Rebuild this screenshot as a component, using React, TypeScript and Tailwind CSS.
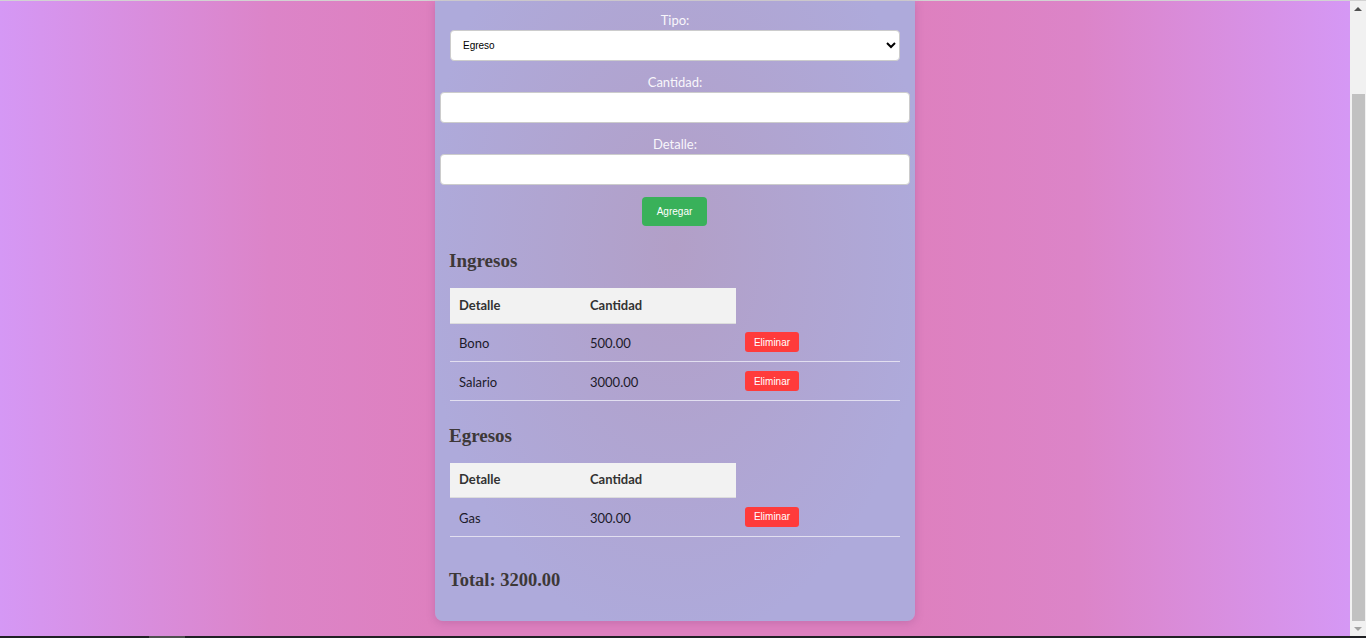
import React from 'react';

type Item = { detalle: string; cantidad: string };

const ingresos: Item[] = [
  { detalle: 'Bono', cantidad: '500.00' },
  { detalle: 'Salario', cantidad: '3000.00' },
];

const egresos: Item[] = [{ detalle: 'Gas', cantidad: '300.00' }];

function Field({ label, children }: { label: string; children: React.ReactNode }) {
  return (
    <div className="mt-[12px] first:mt-0">
      <label className="block text-center text-[13px] leading-[18px] text-[#f8f6fb]">{label}</label>
      <div className="mt-[1px]">{children}</div>
    </div>
  );
}

function Tabla({ items }: { items: Item[] }) {
  return (
    <table className="w-[450px] table-fixed border-collapse font-['Lato',sans-serif] text-[13px]">
      <colgroup>
        <col className="w-[131px]" />
        <col className="w-[155px]" />
        <col className="w-[164px]" />
      </colgroup>
      <thead>
        <tr className="h-[35px]">
          <th className="bg-[#f2f2f2] border-b border-[#dcdcdc] pl-[9px] text-left font-bold text-[#333]">Detalle</th>
          <th className="bg-[#f2f2f2] border-b border-[#dcdcdc] pl-[9px] text-left font-bold text-[#333]">Cantidad</th>
        </tr>
      </thead>
      <tbody>
        {items.map((it) => (
          <tr key={it.detalle} className="h-[38.5px] border-b border-[#e2dff0]">
            <td className="pl-[9px] pt-[3px] text-[#1c1a2a]">{it.detalle}</td>
            <td className="pl-[9px] pt-[3px] text-[#1c1a2a]">{it.cantidad}</td>
            <td className="pl-[9px]">
              <button className="h-[20px] w-[54px] rounded-[3px] bg-[#ff3b3b] font-['Liberation_Sans',Arial,sans-serif] text-[10px] text-white">
                Eliminar
              </button>
            </td>
          </tr>
        ))}
      </tbody>
    </table>
  );
}

export default function App() {
  return (
    <div className="flex h-[638px] w-[1366px] flex-col overflow-hidden font-['Lato',sans-serif]">
      <div className="h-px bg-[#d2d2d2]" />
      <div className="flex flex-1">
        <div className="flex-1 bg-[linear-gradient(to_right,#d598f5_0%,#dc84c8_20%,#de80bf_32%,#de80bf_68%,#dc84c8_80%,#d598f5_100%)]">
          <div className="mx-auto w-[480px] rounded-b-lg bg-[radial-gradient(ellipse_at_50%_40%,#b29fc7_0%,#aeaadb_75%)] px-[15px] pt-[10px] pb-[29px] shadow-[0_2px_8px_rgba(120,60,120,0.25)]">
            <Field label="Tipo:">
              <select
                defaultValue="Egreso"
                className="h-[31px] w-[450px] rounded-[4px] border border-[#cccccc] bg-white pl-[8px] font-['Liberation_Sans',Arial,sans-serif] text-[10px] text-black"
              >
                <option>Ingreso</option>
                <option>Egreso</option>
              </select>
            </Field>
            <Field label="Cantidad:">
              <input className="-mx-[10px] block h-[31px] w-[470px] rounded-[4px] border border-[#cccccc] bg-white" />
            </Field>
            <Field label="Detalle:">
              <input className="-mx-[10px] block h-[31px] w-[470px] rounded-[4px] border border-[#cccccc] bg-white" />
            </Field>
            <div className="mt-[12px] flex justify-center pr-[1px]">
              <button className="h-[29px] w-[65px] rounded-[4px] bg-[#39b15a] font-['Liberation_Sans',Arial,sans-serif] text-[10px] text-white">
                Agregar
              </button>
            </div>

            <h2 className="-ml-px mt-[23px] font-['Liberation_Serif',serif] text-[19px] font-bold leading-[24px] text-[#3d3838]">Ingresos</h2>
            <div className="mt-[15px]">
              <Tabla items={ingresos} />
            </div>

            <h2 className="-ml-px mt-[23px] font-['Liberation_Serif',serif] text-[19px] font-bold leading-[24px] text-[#3d3838]">Egresos</h2>
            <div className="mt-[15px]">
              <Tabla items={egresos} />
            </div>

            <h2 className="-ml-px mt-[31px] font-['Liberation_Serif',serif] text-[18.5px] font-bold leading-[24px] text-[#3d3838]">Total: 3200.00</h2>
          </div>
        </div>
        <div className="flex w-[16px] flex-col items-center bg-[#f1f1f1]">
          <div className="mt-[6px] h-0 w-0 border-x-[4px] border-b-[4px] border-x-transparent border-b-[#505050]" />
          <div className="mt-[83px] h-[527px] w-[13px] bg-[#c1c1c1]" />
          <div className="mt-[6px] h-0 w-0 border-x-[4px] border-t-[4px] border-x-transparent border-t-[#a3a3a3]" />
        </div>
      </div>
      <div className="flex h-[2px] bg-[#202124]">
        <div className="ml-[149px] w-[36px] bg-[#4f4f4f]" />
      </div>
    </div>
  );
}
